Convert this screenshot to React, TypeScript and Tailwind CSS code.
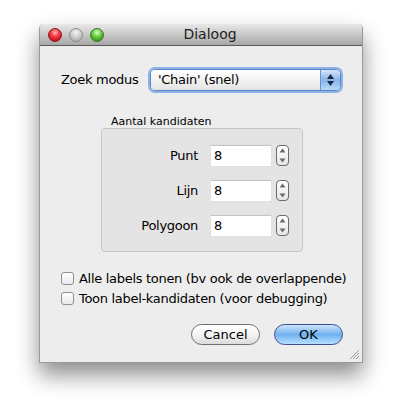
import React from "react";

const font = { fontFamily: '"DejaVu Sans", "Lucida Grande", sans-serif' };

function Light({ tone }: { tone: "red" | "gray" | "green" }) {
  const cls =
    tone === "red"
      ? "bg-[radial-gradient(circle_at_50%_30%,#ffb3b3_0%,#f0303a_45%,#a80010_100%)] border-[#8a1b1b]"
      : tone === "green"
        ? "bg-[radial-gradient(circle_at_50%_30%,#d9ffc4_0%,#62c83a_45%,#2d7a14_100%)] border-[#3b7a22]"
        : "bg-[radial-gradient(circle_at_50%_30%,#f4f4f4_0%,#c9c9c9_50%,#9d9d9d_100%)] border-[#8c8c8c]";
  return <div className={`h-[14px] w-[14px] rounded-full border ${cls}`} />;
}

function Stepper() {
  return (
    <div className="flex h-[21px] w-[13px] flex-col items-center justify-between rounded-[4px] border border-[#6b6b6b] bg-gradient-to-b from-white to-[#e6e6e6] py-[2px]">
      <svg width="7" height="5" viewBox="0 0 7 5">
        <path d="M3.5 0.5 L6.5 4.5 L0.5 4.5 Z" fill="#6a6a6a" />
      </svg>
      <svg width="7" height="5" viewBox="0 0 7 5">
        <path d="M0.5 0.5 L6.5 0.5 L3.5 4.5 Z" fill="#6a6a6a" />
      </svg>
    </div>
  );
}

function SpinRow({ label }: { label: string }) {
  return (
    <div className="flex h-[23px] items-center">
      <div className="w-[97px] pr-[1px] text-right text-[13px] tracking-[-0.3px] text-black">{label}</div>
      <div className="ml-[11px] flex h-[23px] w-[62px] items-center border border-[#e0e0e0] bg-white pl-[3px] text-[13px] shadow-[inset_0_1px_0_#c4c4c4]">
        8
      </div>
      <div className="ml-[4px]">
        <Stepper />
      </div>
    </div>
  );
}

function Check({ label }: { label: string }) {
  return (
    <div className="flex items-center gap-[5px]">
      <div className="h-[13px] w-[13px] rounded-[3px] border border-[#8f8f8f] bg-gradient-to-b from-white to-[#eaeaea]" />
      <span className="text-[13px] leading-none tracking-[-0.3px] text-black">{label}</span>
    </div>
  );
}

export default function App() {
  return (
    <div className="h-[418px] w-[403px] bg-white pl-[39px] pt-[24px]" style={font}>
      <div className="flex h-[339px] w-[324px] flex-col overflow-hidden rounded-t-[5px] border border-t-0 border-[#9a9a9a] bg-[#ededed] shadow-[0_12px_22px_rgba(0,0,0,0.45)]">
        {/* title bar */}
        <div className="relative flex h-[22px] shrink-0 items-center border-b border-[#5a5a5a] bg-gradient-to-b from-[#e9e9e9] to-[#a7a7a7]">
          <div className="flex gap-[7px] pl-[8px]">
            <Light tone="red" />
            <Light tone="gray" />
            <Light tone="green" />
          </div>
          <div className="absolute inset-0 flex items-center justify-center pl-[18px] text-[14px] text-[#222]">Dialoog</div>
        </div>

        {/* body */}
        <div className="relative flex flex-1 flex-col pl-[21px]">
          <div className="mt-[23px] flex h-[22px] items-center">
            <span className="w-[89px] text-[13px] tracking-[-0.3px] text-black">Zoek modus</span>
            <div className="flex h-[22px] w-[191px] items-stretch overflow-hidden rounded-[5px] border border-[#5b87c8] shadow-[0_0_0_2px_#8db3e6]">
              <div className="flex flex-1 items-center bg-gradient-to-b from-white via-[#f2f2f2] to-[#e3e3e3] pl-[7px] text-[13px] tracking-[-0.3px] text-black">
                'Chain' (snel)
              </div>
              <div className="flex w-[20px] flex-col items-center justify-center gap-[2px] border-l border-[#6f94c8] bg-gradient-to-b from-[#d6e7fb] via-[#87b4ea] to-[#b9daf9]">
                <svg width="7" height="5" viewBox="0 0 7 5">
                  <path d="M3.5 0 L7 5 L0 5 Z" fill="#1c2a40" />
                </svg>
                <svg width="7" height="5" viewBox="0 0 7 5">
                  <path d="M0 0 L7 0 L3.5 5 Z" fill="#1c2a40" />
                </svg>
              </div>
            </div>
          </div>

          <div className="ml-[50px] mt-[24px] text-[11px] leading-[13px] text-black">Aantal kandidaten</div>
          <div className="ml-[40px] flex h-[124px] w-[202px] flex-col gap-[12px] rounded-[4px] border border-[#c6c6c6] bg-[#e4e4e4] pt-[15px]">
            <SpinRow label="Punt" />
            <SpinRow label="Lijn" />
            <SpinRow label="Polygoon" />
          </div>

          <div className="mt-[20px] flex flex-col gap-[7px]">
            <Check label="Alle labels tonen (bv ook de overlappende)" />
            <Check label="Toon label-kandidaten (voor debugging)" />
          </div>

          <div className="mt-[19px] flex justify-end gap-[14px] pr-[19px]">
            <button className="h-[21px] w-[69px] rounded-full border border-[#707070] bg-gradient-to-b from-white via-[#f4f4f4] to-[#dcdcdc] text-[13px] leading-none text-black">
              Cancel
            </button>
            <button className="h-[21px] w-[69px] rounded-full border border-[#3a4f92] bg-gradient-to-b from-[#cfe4fb] via-[#6fb0ee] to-[#b6e0ff] text-[13px] leading-none text-black">
              OK
            </button>
          </div>

          <svg className="absolute bottom-[2px] right-[2px]" width="11" height="11" viewBox="0 0 11 11">
            <path d="M1 10 L10 1 M4 10 L10 4 M7 10 L10 7" stroke="#9a9a9a" strokeWidth="1" />
          </svg>
        </div>
      </div>
    </div>
  );
}
